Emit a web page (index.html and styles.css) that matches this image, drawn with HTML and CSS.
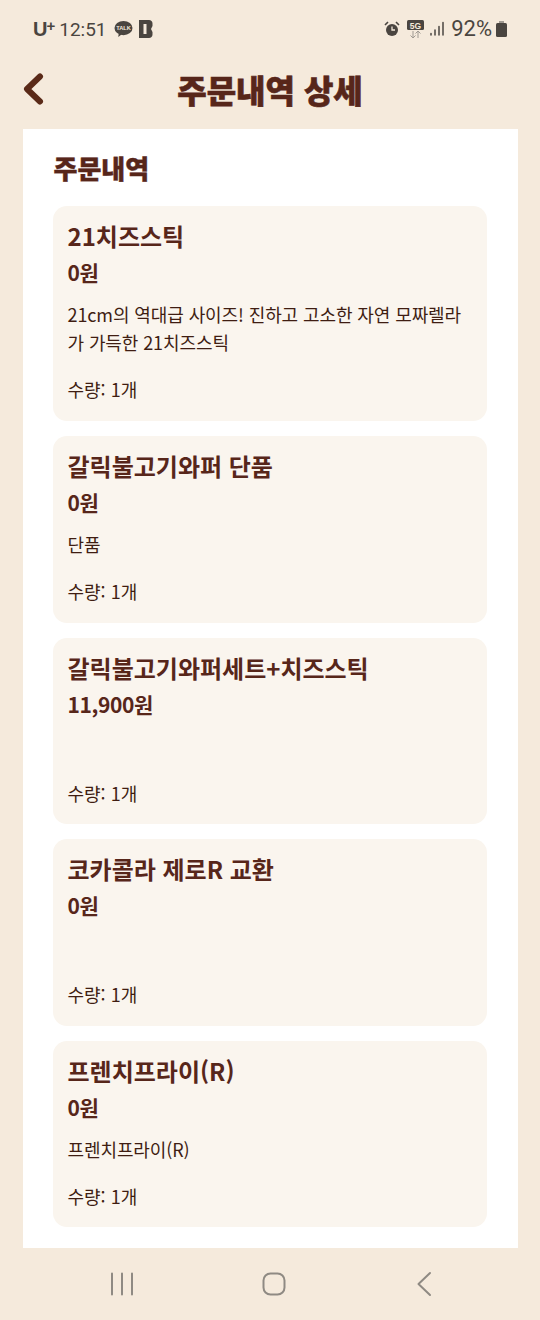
FILE: index.html
```html
<!DOCTYPE html>
<html lang="ko">
<head>
<meta charset="utf-8">
<title>주문내역 상세</title>
<link rel="stylesheet" href="styles.css">
</head>
<body>
<div class="screen">
  <div class="status">
    <div class="status-left">
      <span class="carrier">U<sup>+</sup></span>
      <span class="time">12:51</span>
      <svg class="ic-talk" width="19" height="18" viewBox="0 0 20 18"><ellipse cx="10" cy="8" rx="9.500" ry="7.500" fill="#4a4540"/><path d="M5 13l-.5 4.500L9 14z" fill="#4a4540"/><text x="10" y="10.500" font-size="6" font-family="Liberation Sans" font-weight="700" text-anchor="middle" fill="#f5eadc">TALK</text></svg>
      <svg class="ic-b" width="14" height="18" viewBox="0 0 14 18"><path d="M0 0h10c2 0 3.500 1.500 3.500 3.500v2.500L12 9l1.500 3v2.500c0 2-1.500 3.500-3.500 3.500H0z" fill="#4a4540"/><rect x="4.500" y="4" width="3" height="10" fill="#f5eadc"/></svg>
    </div>
    <div class="status-right">
      <svg width="16" height="16" viewBox="0 0 16 16"><circle cx="8" cy="9" r="6" fill="#4a4540"/><path d="M8 5.500V9h3" stroke="#f5eadc" stroke-width="1.300" fill="none"/><path d="M1 4l3-3M15 4l-3-3" stroke="#4a4540" stroke-width="1.600"/></svg>
      <svg class="ic-5g" width="17" height="18" viewBox="0 0 17 18"><rect width="17" height="10" rx="1.500" fill="#4a4540"/><text x="8.500" y="8.500" font-size="8.500" font-weight="700" font-family="Liberation Sans" text-anchor="middle" fill="#f5eadc">5G</text><path d="M6 11v7M3.500 15.500L6 18l2.500-2.500M11 18v-7M8.500 13.500L11 11l2.500 2.500" stroke="#a09a92" stroke-width="1" fill="none"/></svg>
      <svg class="ic-signal" width="14" height="16" viewBox="0 0 14 16"><path d="M1 14v-1.500M5 14V9M9 14V5.500M13 14V1.500" stroke="#4a4540" stroke-width="1.500" stroke-linecap="round"/></svg>
      <span class="batt-text">92%</span>
      <svg class="ic-batt" width="11" height="16" viewBox="0 0 11 16"><rect y="2" width="11" height="14" rx="1.500" fill="#4a4540"/><rect x="3" width="5" height="2" fill="#a09a92"/></svg>
    </div>
  </div>
  <header class="topbar">
    <svg class="back" width="22" height="32" viewBox="0 0 22 32"><path d="M18 3.500L5 16l13 12.500" fill="none" stroke="#5a2a18" stroke-width="6" stroke-linecap="round" stroke-linejoin="round"/></svg>
    <h1 class="title">주문내역 상세</h1>
  </header>
  <main class="sheet">
    <h2 class="section">주문내역</h2>
    <article class="card card-tall">
      <h3 class="name">21치즈스틱</h3>
      <p class="price">0원</p>
      <p class="desc">21cm의 역대급 사이즈! 진하고 고소한 자연 모짜렐라가 가득한 21치즈스틱</p>
      <p class="qty">수량: 1개</p>
    </article>
    <article class="card">
      <h3 class="name">갈릭불고기와퍼 단품</h3>
      <p class="price">0원</p>
      <p class="desc">단품</p>
      <p class="qty">수량: 1개</p>
    </article>
    <article class="card">
      <h3 class="name">갈릭불고기와퍼세트+치즈스틱</h3>
      <p class="price">11,900원</p>
      <p class="desc"></p>
      <p class="qty">수량: 1개</p>
    </article>
    <article class="card">
      <h3 class="name">코카콜라 제로R 교환</h3>
      <p class="price">0원</p>
      <p class="desc"></p>
      <p class="qty">수량: 1개</p>
    </article>
    <article class="card">
      <h3 class="name">프렌치프라이(R)</h3>
      <p class="price">0원</p>
      <p class="desc">프렌치프라이(R)</p>
      <p class="qty">수량: 1개</p>
    </article>
  </main>
  <nav class="navbar">
    <svg width="24" height="24" viewBox="0 0 24 24"><path d="M2 1.500v21M12 1.500v21M22 1.500v21" stroke="#8f8a83" stroke-width="2" stroke-linecap="round"/></svg>
    <svg class="nav-home" width="24" height="24" viewBox="0 0 24 24"><rect x="1.500" y="1.500" width="21" height="21" rx="7" fill="none" stroke="#8f8a83" stroke-width="2"/></svg>
    <svg width="16" height="26" viewBox="0 0 16 26"><path d="M14 2L2.500 13 14 24" fill="none" stroke="#8f8a83" stroke-width="2" stroke-linecap="round" stroke-linejoin="round"/></svg>
  </nav>
</div>
</body>
</html>
```

FILE: styles.css
```css
* { box-sizing: border-box; margin: 0; padding: 0; }
html, body { width: 540px; height: 1320px; overflow: hidden; }
body { background: #f5eadc; font-family: "Noto Sans CJK KR", "Noto Sans", sans-serif; color: #4f2416; }
.screen { width: 540px; height: 1320px; display: flex; flex-direction: column; }
.status { height: 58px; flex: none; display: flex; justify-content: space-between; align-items: center; padding: 0 33px; color: #4a4540; }
.status-left, .status-right { display: flex; align-items: center; }
.carrier { font: 700 20px/1 "Liberation Sans", sans-serif; margin-right: 4px; }
.carrier sup { font-size: 15px; line-height: 0; vertical-align: 5px; margin-left: -1px; }
.time { font: 400 19px/1 "Roboto", sans-serif; margin-right: 7px; }
.ic-talk { margin-right: 6px; }
.status-right svg { display: block; }
.ic-5g { margin-left: 7px; }
.ic-signal { margin-left: 6px; }
.batt-text { font: 400 22px/1 "Roboto", sans-serif; margin-left: 7px; margin-right: 4px; }
.topbar { height: 71px; flex: none; position: relative; display: flex; align-items: center; justify-content: center; padding-bottom: 9px; }
.back { position: absolute; left: 22px; top: 15px; }
.title { font-size: 32px; font-weight: 900; line-height: 1; color: #57261a; -webkit-text-stroke: 0.6px #57261a; }
.sheet { flex: none; height: 1119px; margin: 0 22.500px; background: #fff; padding: 24px 30.500px 0 30px; overflow: hidden; }
.section { font-size: 26px; font-weight: 900; line-height: 30px; color: #57261a; margin-bottom: 23px; margin-left: 1px; -webkit-text-stroke: 0.4px #57261a; }
.card { background: #faf5ee; border-radius: 14px; padding: 14px 15px 0; margin-bottom: 15px; height: 186.500px; }
.card-tall { height: 215px; }
.name { font-size: 24px; font-weight: 700; line-height: 32px; color: #57261a; }
.price { font-size: 21px; font-weight: 700; line-height: 30px; margin-top: 5px; color: #57261a; letter-spacing: -0.4px; }
.desc { font-size: 18px; font-weight: 400; line-height: 28px; margin-top: 13px; min-height: 28px; color: #3f1d12; letter-spacing: -0.1px; }
.qty { font-size: 18px; font-weight: 400; line-height: 26px; margin-top: 20px; color: #3f1d12; }
.navbar { flex: 1; display: flex; align-items: center; justify-content: space-between; padding: 0 108px 0 110px; }
.nav-home { margin-right: 2px; }
```
